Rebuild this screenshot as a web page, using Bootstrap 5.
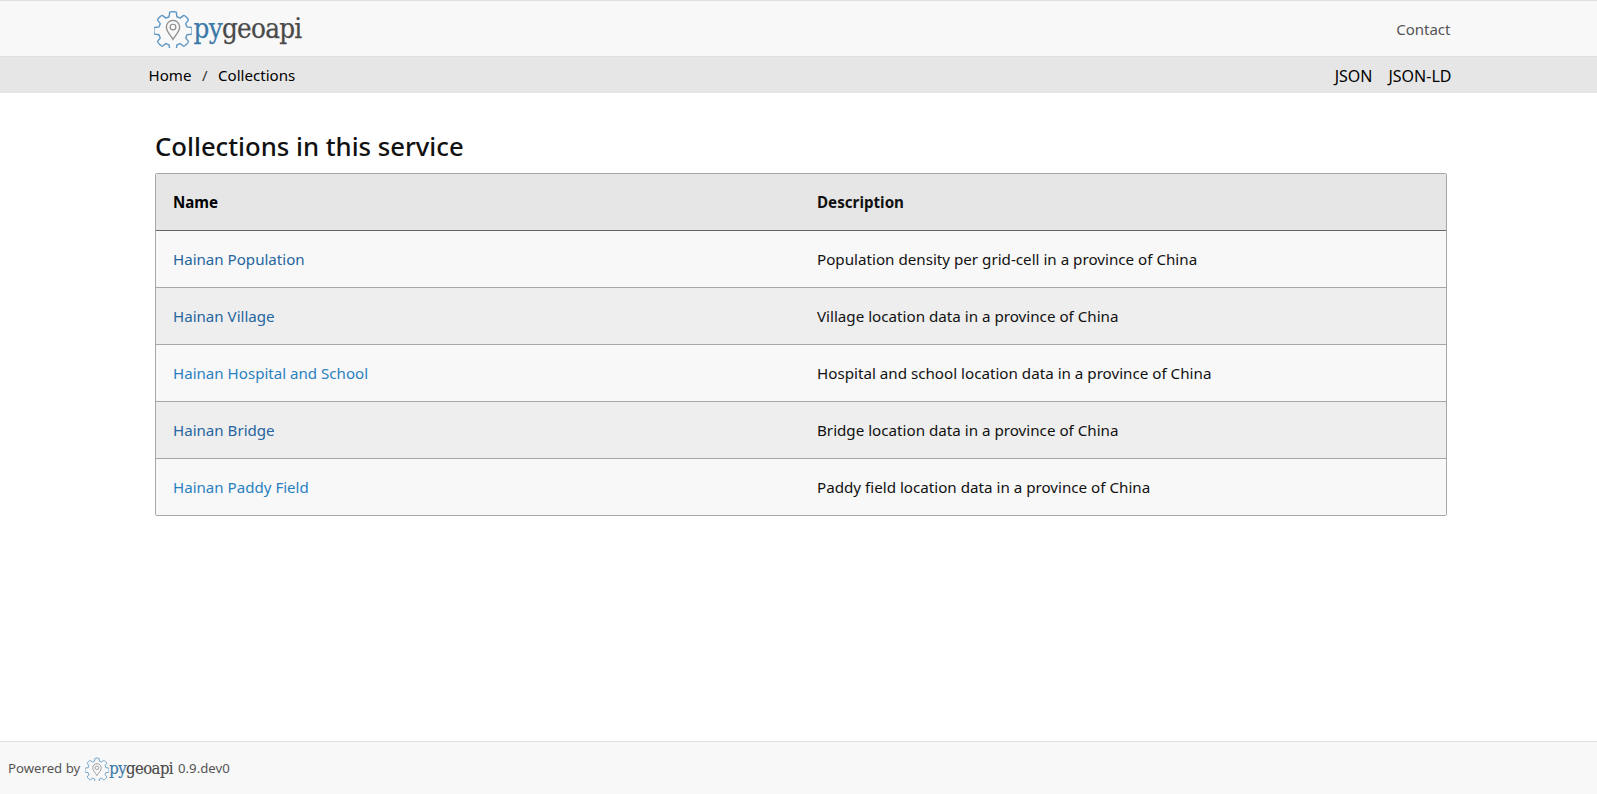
<!DOCTYPE html>
<html lang="en">
<head>
<meta charset="utf-8">
<title>Collections</title>
<link href="https://cdn.jsdelivr.net/npm/bootstrap@5.3.0/dist/css/bootstrap.min.css" rel="stylesheet">
<style>
html,body{height:100%}
body{font-family:"Noto Sans","Open Sans",sans-serif;font-size:15px;color:#212529;display:flex;flex-direction:column;min-height:794px}
.shell{width:1304px;margin-left:148.5px}
.topbar{background:#f8f8f8;border-top:1px solid #e0e0e0;border-bottom:1px solid #e0e0e0;height:57px}
.logo-link{margin-left:5px}
.logo-word{font-family:"DejaVu Serif",serif;font-stretch:condensed;color:#4a4a4a;line-height:1;-webkit-text-stroke:.25px currentColor}
.logo-word b{font-weight:400;color:#3d78a8}
.logo-big{font-size:27.5px;letter-spacing:-.7px;margin-left:2px}
.logo-small{font-size:16.5px;letter-spacing:-.55px;-webkit-text-stroke:.15px currentColor}
.contact{color:#555;text-decoration:none;font-size:15px;margin:2px 2px 0 0}
.crumbbar{background:#e6e6e6;height:36px}
.crumbbar a{color:#000;text-decoration:none;font-size:15.1px}
.crumbbar .rightlinks{margin-right:1px;padding-top:1px}
.crumbbar .rightlinks a{font-size:16px;line-height:20px}
.crumbsep{color:#333;margin:0 10.5px}
.pagebody{flex:1 0 auto}
.inner{width:1292px;margin-left:155px}
.heading{font-size:25.7px;font-weight:500;line-height:30px;margin:39px 0 11px 0;color:#111}
.gridbox{border:1px solid #a6a6a6;border-radius:2px;overflow:hidden}
.cell-row{height:57px;border-bottom:1px solid #a6a6a6;display:flex;align-items:center;font-size:15.1px}
.cell-row:last-child{border-bottom:0;height:56px}
.cell-row.head{background:#e6e6e6;font-weight:700;font-size:15.1px;border-bottom-color:#666;color:#000}
.cell-row.odd{background:#f8f8f8}
.cell-row.even{background:#eee}
.name-cell{width:661px;padding-left:17px}
.name-cell a{color:#25659f;text-decoration:none}
.name-cell a.hovered,.name-cell a.bright{color:#2a80bf}
.desc-cell{color:#111;font-size:15.18px}
.foot{background:#f8f8f8;border-top:1px solid #dedede;height:53px;font-size:13.2px;color:#555;padding:2px 0 0 8px}
.foot-gear{margin:0 0 0 5px}
.foot-version{margin-left:5px}
</style>
</head>
<body>
<svg width="0" height="0" class="position-absolute">
<defs>
<symbol id="gear" viewBox="0 0 40 40">
<path d="M16.5 2.5c0-1 7-1 7 0l.6 4.6 3.4 1.4 3.7-2.8c.8-.6 5.6 4.2 5 5l-2.8 3.7 1.4 3.4 4.6.6c1 0 1 7 0 7l-4.6.6-1.4 3.4 2.8 3.7c.6.8-4.2 5.6-5 5l-3.7-2.8-3.4 1.4-.6 4.6c0 1-7 1-7 0l-.6-4.6-3.4-1.4-3.7 2.8c-.8.6-5.6-4.2-5-5l2.8-3.7-1.4-3.4-4.6-.6c-1 0-1-7 0-7l4.6-.6 1.4-3.4-2.8-3.7c-.6-.8 4.2-5.6 5-5l3.7 2.8 3.4-1.4z" fill="none" stroke="#5f97c4" stroke-width="1.5" stroke-linejoin="round"/>
<path d="M20 31c-3.500-5.500-7-8.500-7-13a7 7 0 0 1 14 0c0 4.500-3.500 7.500-7 13z" fill="none" stroke="#8d8d8d" stroke-width="1.4"/>
<circle cx="20" cy="18" r="3" fill="none" stroke="#8d8d8d" stroke-width="1.3"/>
</symbol>
</defs>
</svg>
<header class="topbar">
<div class="shell d-flex align-items-center justify-content-between h-100">
<a class="logo-link d-flex align-items-center text-decoration-none" href="#">
<svg width="38" height="38"><use href="#gear"/></svg>
<span class="logo-word logo-big"><b>py</b>geoapi</span>
</a>
<a class="contact" href="#">Contact</a>
</div>
</header>
<nav class="crumbbar">
<div class="shell d-flex align-items-center justify-content-between h-100">
<div><a href="#">Home</a><span class="crumbsep">/</span><a href="#">Collections</a></div>
<div class="rightlinks d-flex gap-3"><a href="#">JSON</a><a href="#">JSON-LD</a></div>
</div>
</nav>
<main class="pagebody">
<div class="inner">
<h1 class="heading">Collections in this service</h1>
<div class="gridbox">
<div class="cell-row head"><div class="name-cell">Name</div><div class="desc-cell">Description</div></div>
<div class="cell-row odd"><div class="name-cell"><a href="#">Hainan Population</a></div><div class="desc-cell">Population density per grid-cell in a province of China</div></div>
<div class="cell-row even"><div class="name-cell"><a href="#">Hainan Village</a></div><div class="desc-cell">Village location data in a province of China</div></div>
<div class="cell-row odd"><div class="name-cell"><a class="bright" href="#">Hainan Hospital and School</a></div><div class="desc-cell">Hospital and school location data in a province of China</div></div>
<div class="cell-row even"><div class="name-cell"><a href="#">Hainan Bridge</a></div><div class="desc-cell">Bridge location data in a province of China</div></div>
<div class="cell-row odd"><div class="name-cell"><a class="bright" href="#">Hainan Paddy Field</a></div><div class="desc-cell">Paddy field location data in a province of China</div></div>
</div>
</div>
</main>
<footer class="foot d-flex align-items-center">
<span>Powered by</span>
<svg class="foot-gear" width="24" height="24"><use href="#gear"/></svg>
<span class="logo-word logo-small"><b>py</b>geoapi</span>
<span class="foot-version">0.9.dev0</span>
</footer>
</body>
</html>
